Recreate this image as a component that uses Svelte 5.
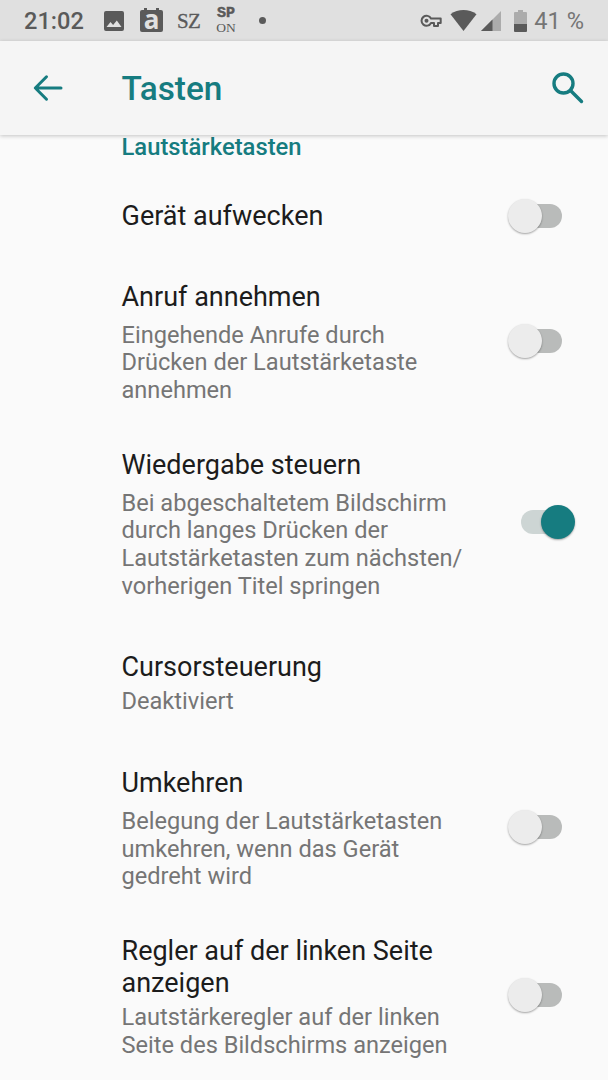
<script lang="ts">
	type Setting = {
		title: string[];
		summary: string[];
		checked?: boolean;
		space: number;
		below?: number;
		tight?: boolean;
	};

	// space: gap above the row, below: extra room under its switch
	let settings: Setting[] = $state([
		{ title: ['Gerät aufwecken'], summary: [], checked: false, space: 38, below: 0 },
		{
			title: ['Anruf annehmen'],
			summary: ['Eingehende Anrufe durch', 'Drücken der Lautstärketaste', 'annehmen'],
			checked: false,
			space: 49,
			below: 3
		},
		{
			title: ['Wiedergabe steuern'],
			summary: [
				'Bei abgeschaltetem Bildschirm',
				'durch langes Drücken der',
				'Lautstärketasten zum nächsten/',
				'vorherigen Titel springen'
			],
			checked: true,
			space: 44.4,
			below: 5
		},
		{ title: ['Cursorsteuerung'], summary: ['Deaktiviert'], space: 50.8, tight: true },
		{
			title: ['Umkehren'],
			summary: ['Belegung der Lautstärketasten', 'umkehren, wenn das Gerät', 'gedreht wird'],
			checked: false,
			space: 51.4,
			below: 4
		},
		{
			title: ['Regler auf der linken Seite', 'anzeigen'],
			summary: ['Lautstärkeregler auf der linken', 'Seite des Bildschirms anzeigen'],
			checked: false,
			space: 44.4,
			below: 4,
			tight: true
		}
	]);
</script>

<div class="screen">
	<div class="status">
		<span class="clock">21:02</span>
		<svg class="picture" width="20" height="20" viewBox="0 0 20 20">
			<path fill="#5a5a5a" fill-rule="evenodd" d="M2 0h16a2 2 0 0 1 2 2v16a2 2 0 0 1-2 2H2a2 2 0 0 1-2-2V2a2 2 0 0 1 2-2zM2.500 16h15l-4.700-6.500-3.700 4.500-2.600-3z" />
		</svg>
		<span class="calendar">a</span>
		<span class="sz">SZ</span>
		<span class="spon"><b>SP</b><span>ON</span></span>
		<span class="dot"></span>
		<span class="grow"></span>
		<svg class="key" width="22" height="14" viewBox="0 0 22 14">
			<path fill="none" stroke="#5a5a5a" stroke-width="2" stroke-linejoin="round" d="M11 4.500A5 5 0 1 0 11 9H14V12H18V9H20.700V4.500Z" />
			<circle cx="6.500" cy="6.800" r="2" fill="#5a5a5a" />
		</svg>
		<svg class="wifi" width="27" height="21" viewBox="0 0 27 21">
			<path fill="#5a5a5a" d="M13.500 21 .5 4.300C8-1.300 19-1.300 26.500 4.300z" />
		</svg>
		<svg class="signal" width="20" height="20" viewBox="0 0 20 20">
			<path fill="#acacac" d="M20 0v20H0z" />
			<path fill="#5a5a5a" d="M11.500 8.500V20H0z" />
		</svg>
		<svg class="battery" width="13" height="22" viewBox="0 0 13 22">
			<path fill="#acacac" d="M4 0h5v2h3q1 0 1 1v11H0V3q0-1 1-1h3z" />
			<path fill="#5a5a5a" d="M0 14h13v7q0 1-1 1H1q-1 0-1-1z" />
		</svg>
		<span class="percent">41 %</span>
	</div>

	<header>
		<svg class="back" width="30" height="28" viewBox="0 0 30 28">
			<path d="M28 14H2.500M13.500 2.800 2.300 14l11.200 11.200" />
		</svg>
		<h1>Tasten</h1>
		<svg class="search" width="32" height="32" viewBox="0 0 32 32">
			<circle cx="11.500" cy="11.500" r="9.500" />
			<path d="m19 19 10.500 10.500" />
		</svg>
	</header>

	<main>
		<h2>Lautstärketasten</h2>
		{#each settings as item}
			<section style="margin-top: {item.space}px">
				<div class="text" class:tight={item.tight}>
					<h3>{#each item.title as line}<span>{line}</span>{/each}</h3>
					{#if item.summary.length}
						<p>{#each item.summary as line}<span>{line}</span>{/each}</p>
					{/if}
				</div>
				{#if item.checked !== undefined}
					<button
						class="switch"
						class:on={item.checked}
						style="margin-bottom: {item.below}px"
						role="switch"
						aria-checked={item.checked}
						aria-label={item.title.join(' ')}
						onclick={() => (item.checked = !item.checked)}
					><i></i></button>
				{/if}
			</section>
		{/each}
	</main>
</div>

<style>
	:global(body) {
		background: #fafafa;
	}
	.screen {
		width: 608px;
		height: 1080px;
		overflow: hidden;
		display: flex;
		flex-direction: column;
		background: #fafafa;
		font-family: Roboto, sans-serif;
	}
	svg {
		display: block;
		flex: none;
	}
	.status {
		height: 41px;
		flex: none;
		box-sizing: border-box;
		padding: 0 24px;
		display: flex;
		align-items: center;
		background: #e0e0e0;
		color: #5a5a5a;
	}
	.clock {
		width: 80px;
		font-size: 23.6px;
		font-weight: 500;
	}
	.calendar {
		position: relative;
		width: 23px;
		height: 22px;
		margin: 1px 0 0 16px;
		border-radius: 2px;
		background: #5a5a5a;
		color: #e0e0e0;
		font: bold 26px/19px "Open Sans", sans-serif;
		text-align: center;
	}
	.calendar::before,
	.calendar::after {
		content: '';
		position: absolute;
		top: -2px;
		left: 4px;
		width: 3px;
		height: 3px;
		background: #5a5a5a;
	}
	.calendar::after {
		left: 16px;
	}
	.sz {
		width: 25px;
		margin-left: 14px;
		font: 21px/20px "Liberation Serif", serif;
		letter-spacing: -0.8px;
		-webkit-text-stroke: 0.3px #5a5a5a;
	}
	.spon {
		width: 20px;
		height: 25px;
		margin-left: 14px;
		display: flex;
		flex-direction: column;
		align-items: center;
		justify-content: space-between;
		font: 13.5px/11px "Liberation Serif", serif;
	}
	.spon b {
		font: bold 15px/12px "Liberation Mono", monospace;
		-webkit-text-stroke: 0.5px #5a5a5a;
	}
	.dot {
		width: 7px;
		height: 7px;
		margin-left: 23px;
		border-radius: 50%;
		background: #5a5a5a;
	}
	.grow {
		flex: 1;
	}
	.wifi {
		margin-left: 8px;
	}
	.signal {
		margin: 1px 0 0 4px;
	}
	.battery {
		margin-left: 13px;
	}
	.percent {
		margin-left: 7px;
		color: #757575;
		font-size: 23.6px;
	}
	header {
		position: relative;
		height: 94px;
		flex: none;
		box-sizing: border-box;
		padding: 0 24px 0 33px;
		display: flex;
		align-items: center;
		background: #f5f5f5;
		box-shadow: 0 1px 4px rgba(0, 0, 0, 0.22);
		color: #167c80;
	}
	header svg {
		fill: none;
		stroke: currentColor;
		stroke-width: 3.4;
		stroke-linecap: round;
		stroke-linejoin: round;
	}
	header .back {
		stroke-width: 3;
	}
	h1,
	h2,
	h3,
	p {
		margin: 0;
	}
	h1 {
		flex: 1;
		margin: 1px 0 0 58.5px;
		font-size: 33.4px;
		font-weight: 500;
	}
	main {
		padding-left: 121.5px;
	}
	h2 {
		margin-top: -1px;
		color: #167c80;
		font-size: 23.8px;
		font-weight: 500;
		line-height: 27.6px;
	}
	section {
		display: flex;
		align-items: center;
		justify-content: space-between;
		padding-right: 33px;
	}
	h3 {
		color: #1c1c1c;
		font-size: 27px;
		font-weight: 400;
		line-height: 32px;
	}
	h3 span,
	p span {
		display: block;
		white-space: nowrap;
	}
	p {
		margin-top: 9px;
		color: #757575;
		font-size: 23.6px;
		line-height: 27.6px;
	}
	.tight p {
		margin-top: 5px;
	}
	.switch {
		display: flex;
		align-items: center;
		width: 54px;
		height: 24px;
		margin: 0 13px 0 0;
		padding: 0;
		border: 0;
		background: linear-gradient(#b9bbba, #b9bbba) right / 41px 100% no-repeat;
		border-radius: 0 12px 12px 0;
	}
	.switch i {
		width: 34px;
		height: 34px;
		flex: none;
		border-radius: 50%;
		background: #ececec;
		box-shadow: 0 1px 2px rgba(0, 0, 0, 0.35);
	}
	.switch.on {
		justify-content: flex-end;
		margin-right: 0;
		border-radius: 12px 0 0 12px;
		background: linear-gradient(#cdd5d4, #cdd5d4) left / 37px 100% no-repeat;
	}
	.switch.on i {
		background: #167c80;
	}
</style>
